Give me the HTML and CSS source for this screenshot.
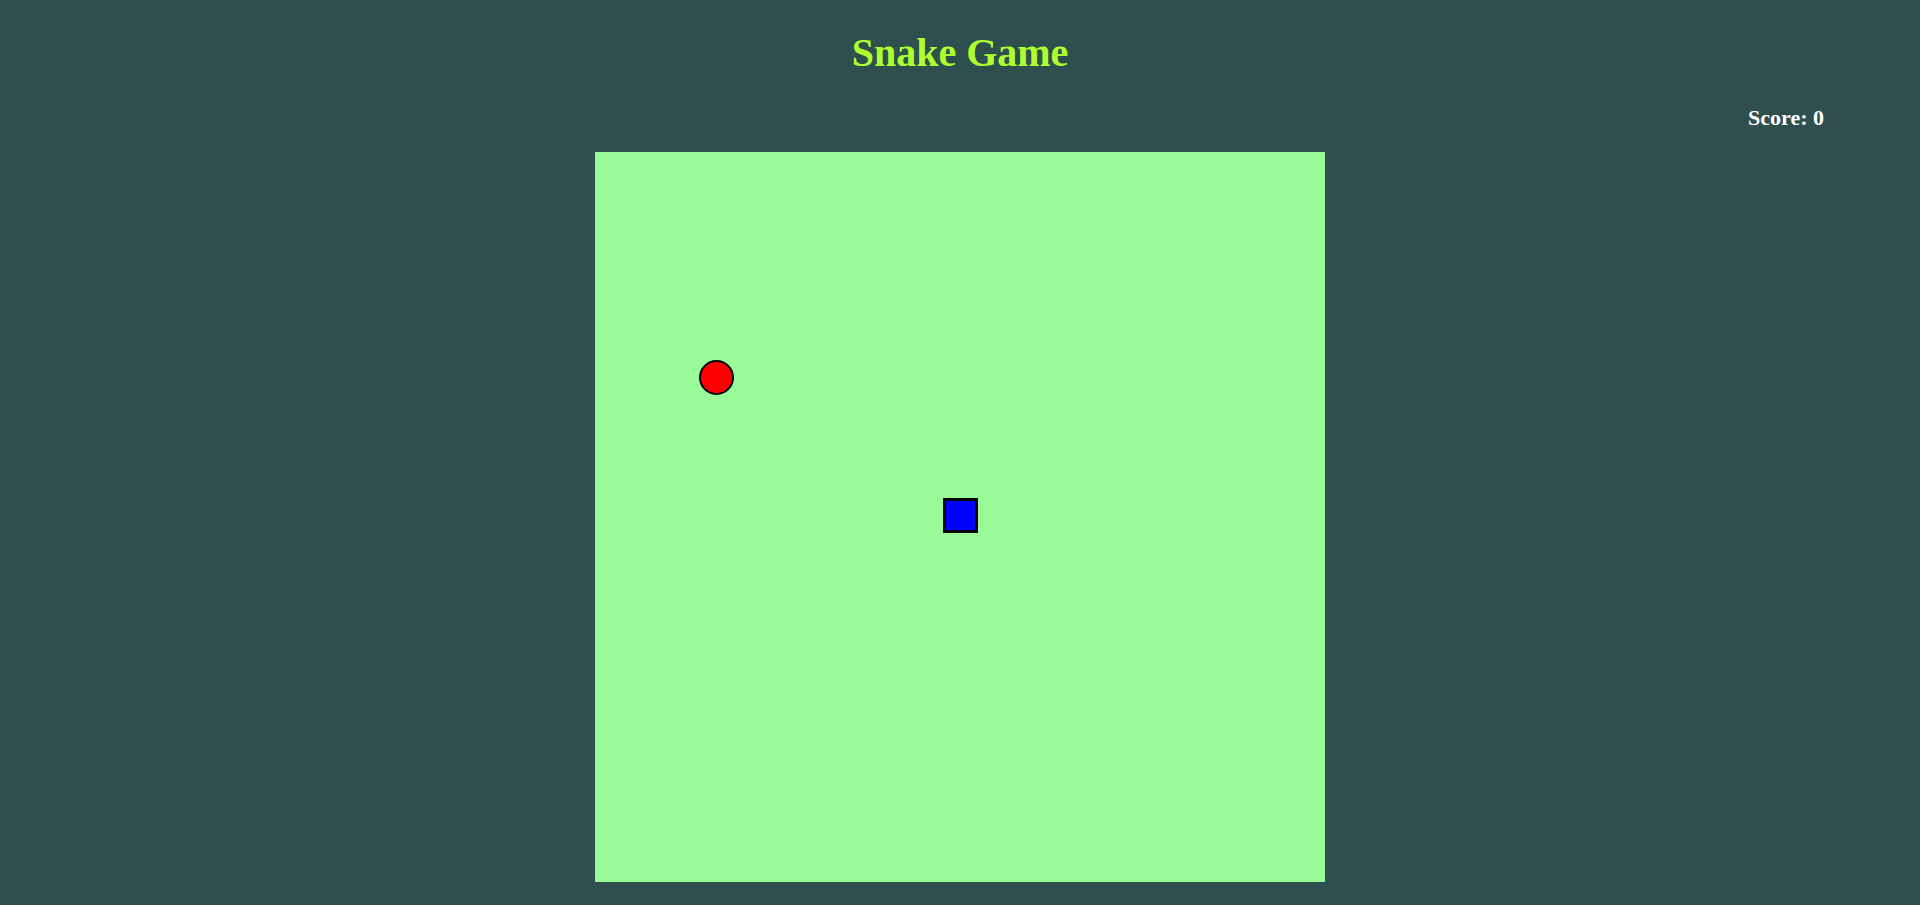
FILE: index.html
```html
<!DOCTYPE html>
<html lang="en">
<head>
<meta charset="utf-8">
<title>Snake Game</title>
<link rel="stylesheet" href="styles.css">
</head>
<body>
<main class="page">
  <h1 class="title">Snake Game</h1>
  <div class="score-row"><span class="score">Score: 0</span></div>
  <div class="board">
    <div class="food" style="left:104px;top:208px"></div>
    <div class="snake-seg" style="left:348px;top:346px"></div>
  </div>
</main>
</body>
</html>
```

FILE: styles.css
```css
html, body {
  margin: 0;
  padding: 0;
}
body {
  background: #2F4F4F;
  font-family: "Liberation Serif", "Times New Roman", serif;
  height: 905px;
  overflow: hidden;
}
.page {
  display: flex;
  flex-direction: column;
  align-items: stretch;
}
.title {
  margin: 30px 0 0;
  font-size: 40px;
  line-height: 46px;
  font-weight: bold;
  color: #ADFF2F;
  text-align: center;
}
.score-row {
  margin-top: 29px;
  padding-right: 96px;
  text-align: right;
  line-height: 25px;
}
.score {
  color: #ffffff;
  font-size: 22px;
  font-weight: bold;
}
.board {
  position: relative;
  margin: 20px auto 0;
  width: 730px;
  height: 730px;
  background: #98FB98;
}
.food {
  position: absolute;
  width: 35px;
  height: 35px;
  box-sizing: border-box;
  border: 2px solid #000;
  border-radius: 50%;
  background: #ff0000;
}
.snake-seg {
  position: absolute;
  width: 35px;
  height: 35px;
  box-sizing: border-box;
  border: 3px solid #000;
  background: #0000ff;
}
```
